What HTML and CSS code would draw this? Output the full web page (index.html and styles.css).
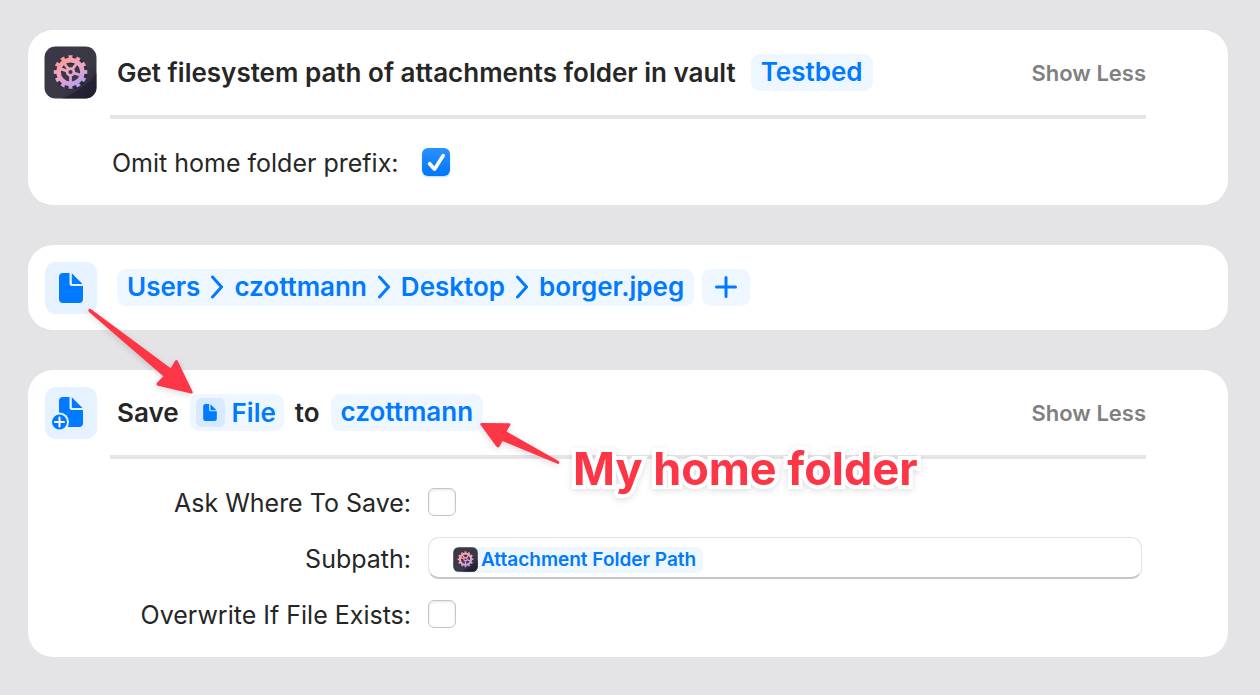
FILE: index.html
```
<!DOCTYPE html>
<html lang="en">
<head>
<meta charset="utf-8">
<title>Shortcut actions</title>
<meta name="viewport" content="width=device-width, initial-scale=1">
<link rel="stylesheet" href="styles.css">
</head>
<body>
<svg class="defs" width="0" height="0" aria-hidden="true">
  <defs>
    <linearGradient id="tile" x1="0" y1="0" x2="1" y2="1">
      <stop offset="0" stop-color="#3a3848"/>
      <stop offset="0.6" stop-color="#3a3945"/>
      <stop offset="1" stop-color="#252234"/>
    </linearGradient>
    <linearGradient id="gear" gradientUnits="userSpaceOnUse" x1="18" y1="10" x2="36" y2="43">
      <stop offset="0" stop-color="#fb9a94"/>
      <stop offset="0.45" stop-color="#f0a6c2"/>
      <stop offset="1" stop-color="#ab9af8"/>
    </linearGradient>
    <symbol id="app" viewBox="0 0 53 53">
      <rect x="0.5" y="0.5" width="52" height="52" rx="11" fill="url(#tile)"/>
      <path d="M52.500 27V41.500a11 11 0 0 1-11 11H18C34 46 45 38 52.500 27z" fill="#1d1a2b" opacity="0.6"/>
      <g fill="none" stroke="#15121d" opacity="0.4" transform="translate(0 1)">
        <circle cx="26.500" cy="26" r="15" stroke-width="4" pathLength="24" stroke-dasharray="1 1"/>
        <circle cx="26.500" cy="26" r="11.700" stroke-width="5"/>
      </g>
      <g fill="none" stroke="url(#gear)">
        <circle cx="26.500" cy="26" r="15" stroke-width="3.600" pathLength="24" stroke-dasharray="1 1" stroke-dashoffset="0.500"/>
        <circle cx="26.500" cy="26" r="11.900" stroke-width="4.600"/>
        <circle cx="26.500" cy="26" r="3.400" stroke-width="2.600"/>
        <path stroke-width="2.800" d="M22.700 24.800L16 22.600M28.800 22.800L33 17M30.300 27.200L37 29.400M26.500 30V38M24.200 22.800L20 17"/>
      </g>
    </symbol>
    <symbol id="doc" viewBox="0 0 24 30">
      <path d="M4 0H10.500V10.500A2.500 2.500 0 0 0 13 13H24V26A4 4 0 0 1 20 30H4A4 4 0 0 1 0 26V4A4 4 0 0 1 4 0z"/>
      <path d="M12.800 0.300L23.500 11H13.800A1 1 0 0 1 12.800 10z"/>
    </symbol>
  </defs>
</svg>

<main class="actions">
  <section class="card">
    <header class="head">
      <svg class="app" aria-hidden="true"><use href="#app"/></svg>
      <h2 class="title">Get filesystem path of attachments folder in vault <button class="token" type="button">Testbed</button></h2>
      <button class="toggle" type="button">Show Less</button>
    </header>
    <div class="options single">
      <div class="option">
        <label for="omit">Omit home folder prefix:</label>
        <input class="check" type="checkbox" id="omit" checked>
      </div>
    </div>
  </section>

  <section class="card">
    <header class="head">
      <span class="badge"><svg class="doc" aria-hidden="true"><use href="#doc"/></svg></span>
      <div class="title path">
        <button class="token crumbs" type="button">
          <span>Users</span>
          <svg class="chevron" viewBox="0 0 12 24" aria-hidden="true"><path d="M1.500 2L10.500 12L1.500 22"/></svg>
          <span>czottmann</span>
          <svg class="chevron" viewBox="0 0 12 24" aria-hidden="true"><path d="M1.500 2L10.500 12L1.500 22"/></svg>
          <span>Desktop</span>
          <svg class="chevron" viewBox="0 0 12 24" aria-hidden="true"><path d="M1.500 2L10.500 12L1.500 22"/></svg>
          <span>borger.jpeg</span>
        </button>
        <button class="token add" type="button" aria-label="Add file"><svg class="plus" viewBox="0 0 22 22" aria-hidden="true"><path d="M1.500 11H20.500M11 1.500V20.500"/></svg></button>
      </div>
    </header>
  </section>

  <section class="card">
    <header class="head">
      <span class="badge">
        <svg class="save" viewBox="0 0 52 52" aria-hidden="true">
          <use href="#doc" x="14" y="10" width="24" height="30"/>
          <circle class="cut" cx="14.500" cy="35" r="9.500"/>
          <circle cx="14.500" cy="35" r="7.500"/>
          <path class="cross" d="M10 35H19M14.500 30.500V39.500"/>
        </svg>
      </span>
      <h2 class="title sentence">Save <button class="token file" type="button"><span class="mini"><svg class="minidoc" aria-hidden="true"><use href="#doc"/></svg></span>File</button> to <button class="token" type="button">czottmann</button></h2>
      <button class="toggle" type="button">Show Less</button>
    </header>
    <div class="options form">
      <div class="option">
        <label for="ask">Ask Where To Save:</label>
        <input class="check" type="checkbox" id="ask">
      </div>
      <div class="option">
        <label for="subpath">Subpath:</label>
        <div class="field">
          <button class="variable" type="button"><svg class="tiny" aria-hidden="true"><use href="#app"/></svg>Attachment Folder Path</button>
          <input class="entry" type="text" id="subpath">
        </div>
      </div>
      <div class="option">
        <label for="overwrite">Overwrite If File Exists:</label>
        <input class="check" type="checkbox" id="overwrite">
      </div>
    </div>
    <svg class="arrows" viewBox="0 0 560 180" aria-hidden="true">
      <path d="M60.500 9.500Q61.500 8 63.500 9.500L142.700 68.300L147 61Q148.700 59 150 61.500L164.500 91.500Q165.500 94 163 93.500L130 85.700Q127.500 84.700 129 82.700L135.300 76.300L61 12Q60 11 60.500 9.500z"/>
      <path d="M453 125.500Q451 123 454 123L481 123.300Q483.500 123.500 482 125.500L478.500 131.500L530.500 161Q532.500 163.500 530 164L474.500 141L471.500 146.500Q470 148.500 468 146z"/>
    </svg>
    <p class="note">My home folder</p>
  </section>
</main>
</body>
</html>
```
FILE: styles.css
```
* {
  box-sizing: border-box;
}

body {
  margin: 0;
  background: #e4e3e6;
  color: #262626;
  font-family: Inter, "Liberation Sans", sans-serif;
  font-size: 25px;
  line-height: 36px;
}

button,
input {
  margin: 0;
  padding: 0;
  border: 0;
  background: none;
  color: inherit;
  font: inherit;
}

.defs {
  position: absolute;
}

.actions {
  display: flex;
  flex-direction: column;
  gap: 40px;
  padding: 30px 32px 38px 28px;
}

.card {
  position: relative;
  border-radius: 25px;
  background: #fff;
}

.head {
  display: flex;
  align-items: center;
  padding: 16px 82px 16px 16px;
}

.app {
  flex: none;
  width: 53px;
  height: 53px;
}

.badge {
  display: flex;
  flex: none;
  align-items: center;
  justify-content: center;
  width: 52px;
  height: 52px;
  margin: 1px 0 0 1px;
  border-radius: 11px;
  background: #e6f2ff;
}

.doc {
  width: 24px;
  height: 30px;
  fill: #007aff;
}

.save {
  width: 52px;
  height: 52px;
  fill: #007aff;
}

.cut {
  fill: #e6f2ff;
}

.cross {
  stroke: #fff;
  stroke-width: 2;
  stroke-linecap: round;
}

.title {
  display: flex;
  flex: 1;
  align-items: center;
  gap: 15px;
  margin: 0;
  padding-left: 20px;
  font-size: 26px;
  font-weight: 600;
  line-height: 34px;
  white-space: nowrap;
}

.token {
  height: 37px;
  padding: 0 10px 1px;
  border-radius: 9px;
  background: #eef6ff;
  color: #007aff;
}

.path {
  gap: 8px;
}

.sentence {
  gap: 11px;
}

.crumbs {
  display: flex;
  align-items: center;
  gap: 11px;
}

.chevron {
  width: 12px;
  height: 24px;
}

.chevron,
.plus {
  fill: none;
  stroke: #007aff;
  stroke-width: 3;
  stroke-linecap: round;
  stroke-linejoin: round;
}

.add {
  display: flex;
  align-items: center;
  justify-content: center;
  width: 48px;
}

.plus {
  width: 22px;
  height: 22px;
}

.file {
  display: flex;
  align-items: center;
  gap: 7px;
  padding: 0 8px 0 6px;
}

.mini {
  display: flex;
  align-items: center;
  justify-content: center;
  width: 29px;
  height: 29px;
  border-radius: 6px;
  background: #d8eaff;
}

.minidoc {
  width: 14px;
  height: 17px;
  fill: #007aff;
}

.toggle {
  color: #808080;
  font-size: 22px;
  font-weight: 600;
  line-height: 34px;
}

.options {
  margin: 0 82px;
  padding: 15px 0;
  border-top: 4px solid #e5e5e5;
}

.option {
  display: flex;
  align-items: center;
  gap: 17px;
  height: 56px;
  padding: 0 4px 0 2px;
}

.option label {
  flex: none;
  padding-top: 2px;
}

.single label {
  width: 293px;
}

.form label {
  width: 299px;
  text-align: right;
}

.check {
  display: grid;
  place-items: center;
  width: 28px;
  height: 28px;
  border: 1px solid #c6c6c6;
  border-radius: 6px;
  background: #fff;
  box-shadow: inset 0 1px 3px #e2e2e2;
  appearance: none;
}

.check:checked {
  border: 0;
  background: linear-gradient(#2b90ff, #0077fa);
  box-shadow: 0 1px 2px #b5d8ff;
}

.check:checked::before {
  width: 20px;
  height: 20px;
  background: #fff;
  clip-path: path("M2.300 10.500Q3.800 9 5.300 10.700L8.300 14.300L15.500 2.700Q17 1 18.500 2.200Q19.500 3.200 18.700 4.500L10.200 18Q8.500 20 6.800 18L2.200 13Q1 11.700 2.300 10.500z");
  content: "";
}

.field {
  display: flex;
  flex: 1;
  align-items: center;
  height: 42px;
  padding: 4px 20px 0 24px;
  border: 1px solid #e4e4e4;
  border-bottom: 2px solid #c6c6c6;
  border-radius: 11px;
}

.variable {
  display: flex;
  align-items: center;
  gap: 3px;
  height: 26px;
  padding-right: 7px;
  border-radius: 7px;
  background: #eef6ff;
  color: #007aff;
  font-size: 19px;
  font-weight: 600;
  white-space: nowrap;
}

.tiny {
  width: 25px;
  height: 25px;
}

.entry {
  flex: 1;
  min-width: 0;
  outline: 0;
}

.arrows {
  position: absolute;
  top: -70px;
  left: 0;
  width: 560px;
  height: 180px;
  fill: #fc3547;
  filter: drop-shadow(0 2px 3px rgb(0 0 0 / 15%));
  pointer-events: none;
}

.note {
  position: absolute;
  top: 71px;
  left: 545px;
  margin: 0;
  color: #fc3547;
  font-size: 45px;
  font-weight: 700;
  line-height: 56px;
  white-space: nowrap;
  paint-order: stroke fill;
  stroke-linejoin: round;
  -webkit-text-stroke: 8px #fff;
  filter: drop-shadow(0 2px 3px rgb(0 0 0 / 12%));
}
```
